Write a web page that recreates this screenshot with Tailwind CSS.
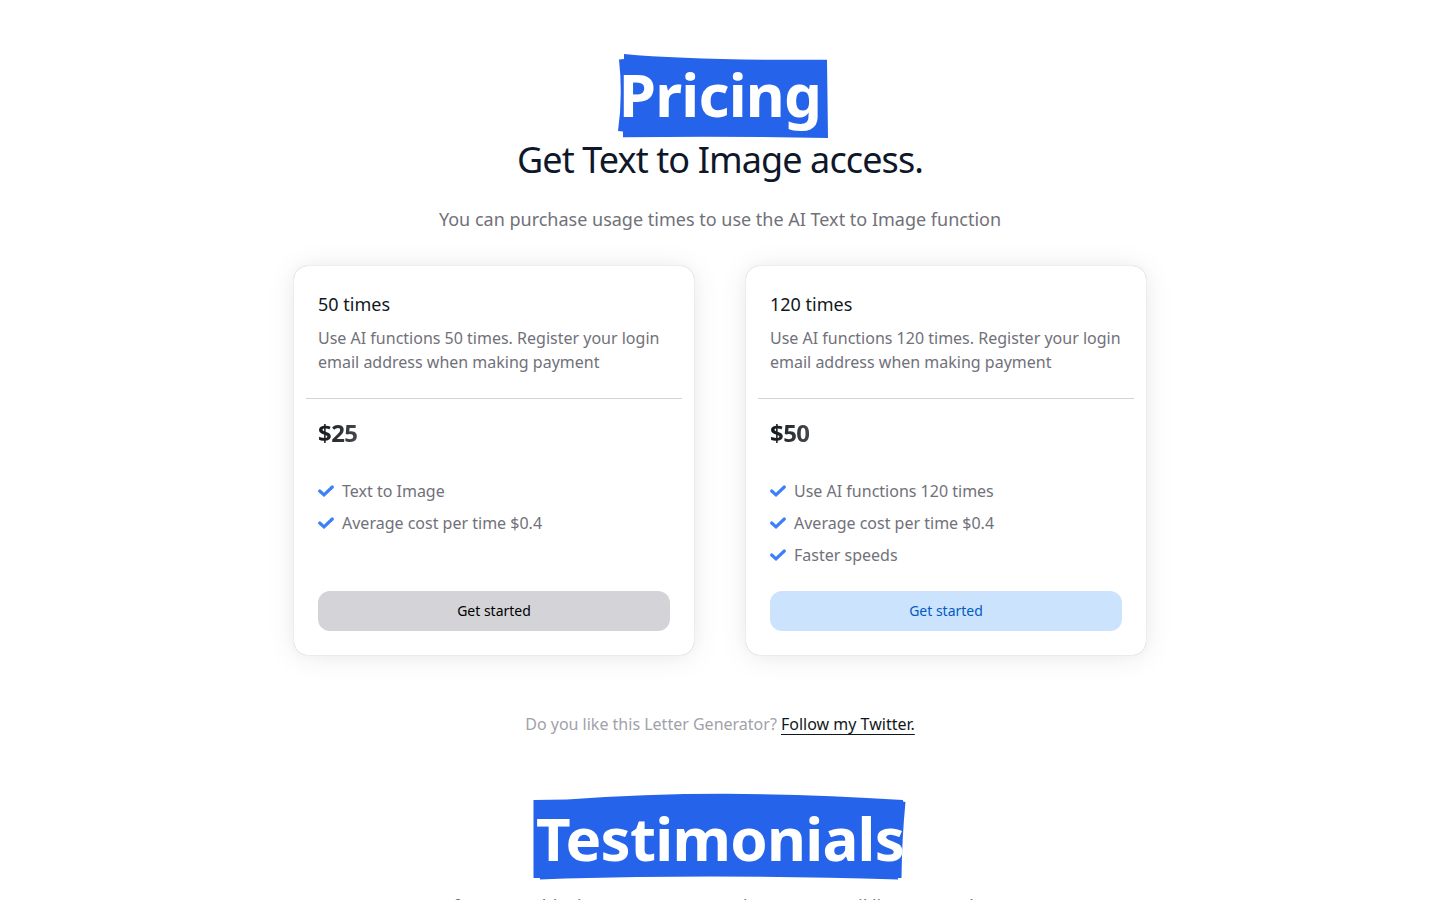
<!DOCTYPE html>
<html lang="en">
<head>
  <meta charset="UTF-8" />
  <meta name="viewport" content="width=device-width, initial-scale=1.0" />
  <title>Pricing</title>
  <script src="https://cdn.jsdelivr.net/npm/@tailwindcss/browser@4"></script>
</head>
<body class="bg-white font-['Noto_Sans',sans-serif] text-[#11181c] h-screen overflow-hidden">
  <svg class="hidden">
    <symbol id="check" viewBox="0 0 16 16">
      <path d="M1.7 8 L6 11.900 L14.300 4" fill="none" stroke="currentColor" stroke-width="3.2" stroke-linecap="round" stroke-linejoin="miter" />
    </symbol>
  </svg>

  <section id="pricing" class="flex flex-col items-center px-6 pt-16">
    <div class="flex flex-col items-center text-center">
      <h2 class="relative text-3xl font-bold tracking-tight text-white">
        <svg class="absolute -left-0.5 -top-3 w-[212px] h-[88px] text-[#2563eb]" viewBox="0 0 212 88">
          <path fill="currentColor" d="M7 2 Q75 8.500 210 7.700 L211 86 Q110 84 6 85.300 L6 79.500 L1 79 Q6 44 2 7.500 L7 7 Z" />
        </svg>
        <span class="relative block text-6xl leading-[60px]">Pricing</span>
      </h2>
      <h3 class="mt-4 text-4xl leading-10 tracking-tight text-[#0f172a]">Get Text to Image access.</h3>
      <p class="mt-6 text-lg leading-[30px] text-[#71717a]">You can purchase usage times to use the AI Text to Image function</p>
    </div>

    <div class="mt-8 grid w-full max-w-[852px] grid-cols-1 gap-[52px] md:grid-cols-2">
      <div class="flex flex-col rounded-[14px] p-3 shadow-[0_0_15px_rgba(0,0,0,0.03),0_2px_30px_rgba(0,0,0,0.08),0_0_1px_rgba(0,0,0,0.3)]">
        <div class="px-3 pt-3 pb-6">
          <h4 class="text-lg">50 times</h4>
          <p class="mt-2 text-[#71717a]">Use AI functions 50 times. Register your login email address when making payment</p>
        </div>
        <hr class="border-zinc-300" />
        <div class="flex grow flex-col px-3 pt-4 pb-3">
          <p class="self-start bg-linear-to-r from-[#11181c] to-[#45484c] bg-clip-text text-2xl leading-9 font-bold tracking-tight text-transparent">$25</p>
          <ul class="mt-7 mb-6 flex grow flex-col gap-2 text-[#71717a]">
            <li class="flex items-center gap-2"><svg class="size-4 text-[#3b82f6]"><use href="#check" /></svg>Text to Image</li>
            <li class="flex items-center gap-2"><svg class="size-4 text-[#3b82f6]"><use href="#check" /></svg>Average cost per time $0.4</li>
          </ul>
          <button type="button" class="h-10 w-full rounded-xl bg-zinc-300 text-sm text-black">Get started</button>
        </div>
      </div>

      <div class="flex flex-col rounded-[14px] p-3 shadow-[0_0_15px_rgba(0,0,0,0.03),0_2px_30px_rgba(0,0,0,0.08),0_0_1px_rgba(0,0,0,0.3)]">
        <div class="px-3 pt-3 pb-6">
          <h4 class="text-lg">120 times</h4>
          <p class="mt-2 text-[#71717a]">Use AI functions 120 times. Register your login email address when making payment</p>
        </div>
        <hr class="border-zinc-300" />
        <div class="flex grow flex-col px-3 pt-4 pb-3">
          <p class="self-start bg-linear-to-r from-[#11181c] to-[#45484c] bg-clip-text text-2xl leading-9 font-bold tracking-tight text-transparent">$50</p>
          <ul class="mt-7 mb-6 flex grow flex-col gap-2 text-[#71717a]">
            <li class="flex items-center gap-2"><svg class="size-4 text-[#3b82f6]"><use href="#check" /></svg>Use AI functions 120 times</li>
            <li class="flex items-center gap-2"><svg class="size-4 text-[#3b82f6]"><use href="#check" /></svg>Average cost per time $0.4</li>
            <li class="flex items-center gap-2"><svg class="size-4 text-[#3b82f6]"><use href="#check" /></svg>Faster speeds</li>
          </ul>
          <button type="button" class="h-10 w-full rounded-xl bg-[#cce3fd] text-sm text-[#005bc4]">Get started</button>
        </div>
      </div>
    </div>

    <p class="mt-[57px] text-[#a1a1aa]">Do you like this Letter Generator? <a href="#" class="text-[#11181c] underline underline-offset-4">Follow my Twitter.</a></p>
  </section>

  <section id="testimonials" class="flex flex-col items-center px-6 pt-18 text-center">
    <h2 class="relative text-3xl font-bold tracking-tight text-white">
      <svg class="absolute -left-1 -top-4 w-[376px] h-[90px] text-[#2563eb]" viewBox="0 0 376 90">
        <path fill="currentColor" d="M1.500 8 L35 7.500 Q190 -4 371 8 L371 9.500 L373.500 10 Q370 45 369.500 86 L366 86 L366 87.500 Q190 82 33 86.500 L8 87.500 L8 86 L1.500 86 Z" />
      </svg>
      <span class="relative block text-6xl leading-[60px]">Testimonials</span>
    </h2>
    <p class="mt-6 text-lg text-[#71717a]">If you are able, leave us a score and use our email list on any day</p>
  </section>
</body>
</html>
